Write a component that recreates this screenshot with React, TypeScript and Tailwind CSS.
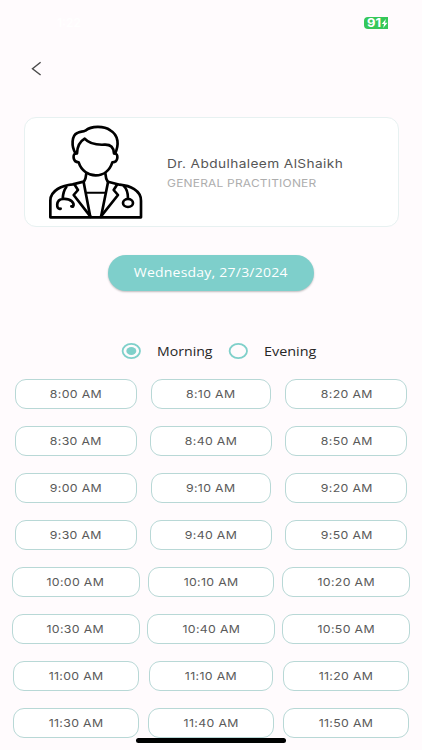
import React, { useState } from "react";

const slots = [
  { time: "8:00 AM", width: 122 },
  { time: "8:10 AM", width: 120 },
  { time: "8:20 AM", width: 122 },
  { time: "8:30 AM", width: 122 },
  { time: "8:40 AM", width: 122 },
  { time: "8:50 AM", width: 122 },
  { time: "9:00 AM", width: 122 },
  { time: "9:10 AM", width: 120 },
  { time: "9:20 AM", width: 122 },
  { time: "9:30 AM", width: 122 },
  { time: "9:40 AM", width: 122 },
  { time: "9:50 AM", width: 122 },
  { time: "10:00 AM", width: 128 },
  { time: "10:10 AM", width: 126 },
  { time: "10:20 AM", width: 128 },
  { time: "10:30 AM", width: 128 },
  { time: "10:40 AM", width: 128 },
  { time: "10:50 AM", width: 128 },
  { time: "11:00 AM", width: 126 },
  { time: "11:10 AM", width: 124 },
  { time: "11:20 AM", width: 126 },
  { time: "11:30 AM", width: 126 },
  { time: "11:40 AM", width: 126 },
  { time: "11:50 AM", width: 126 },
];

function StatusBar() {
  return (
    <div className="flex h-[46px] items-center pl-[57px] pr-[34px] font-['Inter',sans-serif] text-white">
      <span className="text-[12px] font-semibold">1:22</span>
      <div className="ml-auto flex h-3 w-[24px] items-center overflow-hidden rounded-l-[4px] bg-[#35c759] pl-[3px]">
        <span className="w-[14px] origin-left scale-x-[1.13] text-[11.5px] leading-3 font-bold">91</span>
        <svg viewBox="0 0 7 10" className="h-[9px] w-[7px] shrink-0" fill="currentColor">
          <path d="M5 0 0.4 5.6H3L2 10 6.8 4.2H4.1Z" />
        </svg>
      </div>
    </div>
  );
}

function DoctorIcon() {
  return (
    <svg viewBox="0 0 330 300" className="mb-[2px] h-[100px] w-[110px] shrink-0" fill="none" stroke="#000" strokeWidth="8" strokeLinejoin="round" strokeLinecap="round">
      {/* hair */}
      <path d="M107 98C93 76 95 43 112 36C119 31 128 33 136 29C154 14 192 14 211 28C237 43 237 73 225 98" />
      <path d="M111 97C112 76 120 61 134 53C150 71 172 72 193 71C211 70 221 79 222 97" />
      {/* face and ears */}
      <path d="M109 96C97 98 97 123 116 124C124 149 145 163 167 163C190 163 209 149 217 124C236 123 236 98 223 96" />
      {/* neck and shirt */}
      <path d="M139 157C138 171 135 178 131 184L151 288M196 157C197 171 200 178 204 184L183 288" />
      <path d="M141 215H194" strokeWidth="6" />
      {/* coat */}
      <path d="M131 182L98 190C67 193 31 208 31 239V289H303V239C303 208 270 194 239 191L204 182" />
      <path d="M103 190L114 207L101 222L151 286M232 190L221 207L234 222L183 286" />
      {/* stethoscope */}
      <path d="M79 198C72 207 69 219 68 233M62 263C48 268 46 235 69 234C93 232 105 247 99 257L94 256" />
      <path d="M251 194C261 203 264 217 264 233" />
      <ellipse cx="264" cy="246" rx="15" ry="12" />
    </svg>
  );
}

function DoctorCard() {
  return (
    <div className="mx-6 mt-[31px] flex h-[110px] w-[375px] items-center rounded-[12px] border border-[#e7f1f1] bg-white pl-[15px] font-['Inter',sans-serif]">
      <DoctorIcon />
      <div className="ml-[16.5px] pt-[5px] whitespace-nowrap">
        <h1 className="origin-left scale-x-[1.14] text-[12px] leading-5 tracking-[0.35px] text-[#565656]">Dr. Abdulhaleem AlShaikh</h1>
        <p className="origin-left scale-x-[1.14] text-[10.5px] leading-5 tracking-[0.18px] text-[#adadad]">GENERAL PRACTITIONER</p>
      </div>
    </div>
  );
}

function RadioIcon({ checked }: { checked: boolean }) {
  return (
    <svg viewBox="0 0 20 16" className="h-4 w-5 shrink-0" fill="none">
      <ellipse cx="10.3" cy="8" rx="8.7" ry="7.1" stroke="#7fd0ca" strokeWidth="1.8" />
      {checked && <ellipse cx="10.3" cy="8" rx="5" ry="4" fill="#7fd0ca" />}
    </svg>
  );
}

export default function App() {
  const [period, setPeriod] = useState("Morning");

  return (
    <main className="relative h-[750px] w-[422px] overflow-hidden bg-[#fffbfd]">
      <StatusBar />
      <button className="ml-[31px] mt-[15px] block h-[16px] w-[11px] text-[#4a4a4a]" aria-label="Back">
        <svg viewBox="0 0 11 16" className="h-4 w-[11px]" fill="none" stroke="currentColor" strokeWidth="1.4">
          <path d="M9.6 1.3 1.5 7.8 9.6 14" />
        </svg>
      </button>
      <div className="h-[8.5px]" />
      <DoctorCard />

      <button className="mx-auto mt-7 flex h-9 w-[206px] items-center justify-center rounded-[18px] bg-[#7ecfcb] whitespace-nowrap shadow-[0_1px_2px_rgba(0,0,0,0.25)]">
        <span className="scale-x-[1.12] pt-[2px] font-['Open_Sans',sans-serif] text-[12.5px] tracking-[0.2px] text-white">Wednesday, 27/3/2024</span>
      </button>

      <div className="mt-[50.5px] flex h-5 items-center pl-[121px] font-['Open_Sans',sans-serif] text-[12.5px] text-[#262626]">
        <button className="flex w-[107px] items-center" onClick={() => setPeriod("Morning")}>
          <RadioIcon checked={period === "Morning"} />
          <span className="ml-4 origin-left scale-x-[1.13] pt-[2px]">Morning</span>
        </button>
        <button className="flex items-center" onClick={() => setPeriod("Evening")}>
          <RadioIcon checked={period === "Evening"} />
          <span className="ml-4 origin-left scale-x-[1.15] pt-[2px]">Evening</span>
        </button>
      </div>

      <div className="mt-[18px] grid grid-cols-3 justify-items-center gap-y-[17px] px-2">
        {slots.map((slot) => (
          <button key={slot.time} style={{ width: slot.width }} className="flex h-[30px] items-center justify-center rounded-[11px] border border-[#b8d8d6] bg-white">
            <span className="scale-x-[1.14] pt-[2px] font-['Inter',sans-serif] text-[10.8px] tracking-[0.3px] whitespace-nowrap text-[#5a5a5a]">{slot.time}</span>
          </button>
        ))}
      </div>

      {/* home indicator */}
      <div className="absolute top-[738px] left-[136px] h-[4.5px] w-[150px] rounded-full bg-black" />
    </main>
  );
}
